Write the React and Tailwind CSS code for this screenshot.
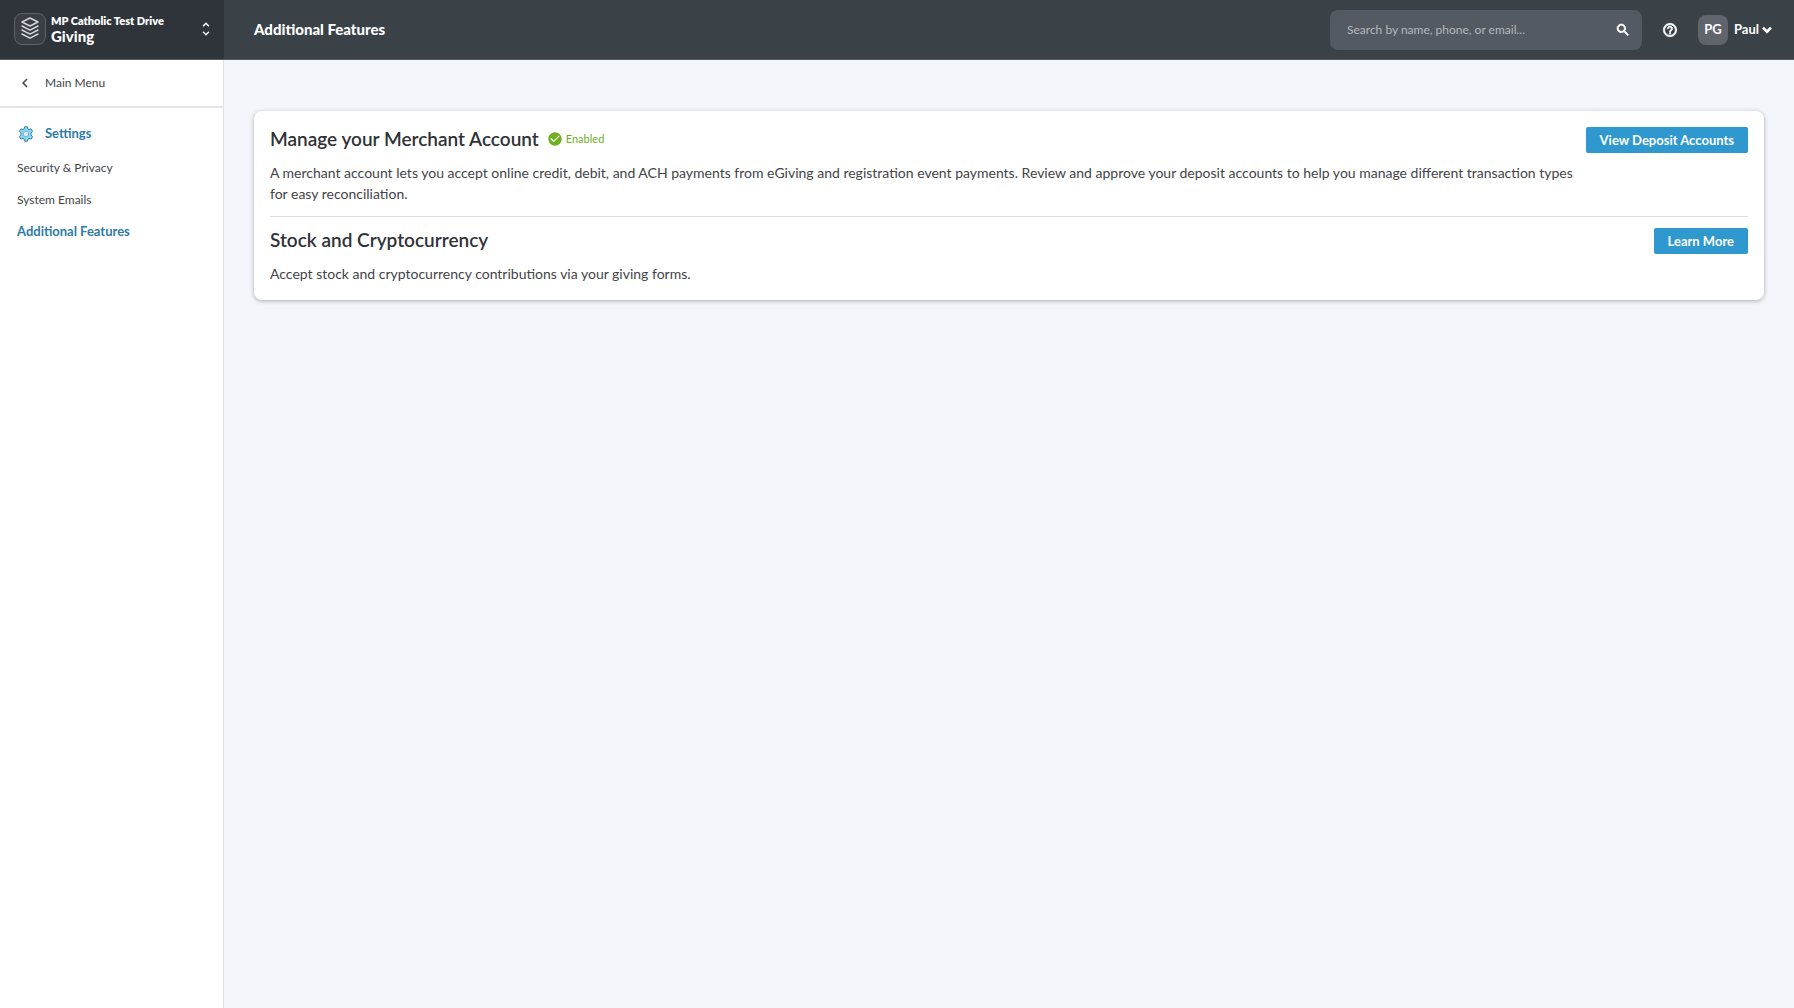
import {
  MdCheckCircle,
  MdChevronLeft,
  MdHelpOutline,
  MdKeyboardArrowDown,
  MdSearch,
  MdUnfoldMore,
} from 'react-icons/md';

function LayersLogo() {
  return (
    <svg viewBox="0 0 32 32" className="size-8 shrink-0" fill="none" aria-hidden="true">
      <rect x="0.5" y="0.5" width="31" height="31" rx="7.5" fill="#3a3f47" stroke="#5d6269" />
      <g stroke="#d2d5d9" strokeWidth="1.5" strokeLinejoin="round" strokeLinecap="round">
        <path d="M16 5 24 9 16 13 8 9Z" />
        <path d="M8 13 16 17.200 24 13" />
        <path d="M8 17 16 21.200 24 17" />
        <path d="M8 21 16 25.200 24 21" />
      </g>
    </svg>
  );
}

function GearIcon() {
  return (
    <svg viewBox="0 0 16 16" className="size-4 shrink-0" aria-hidden="true">
      <path
        d="M6.6 .8h2.8l.5 2.200 1.100.6 2.200-.7 1.400 2.400L13 7v2l1.600 1.700-1.400 2.400-2.200-.7-1.100.6-.5 2.200H6.600l-.5-2.200-1.100-.6-2.200.7-1.400-2.400L3 9V7L1.400 5.300l1.400-2.400 2.200.7 1.100-.6Z"
        fill="#8fd0f0"
        stroke="#3a88b0"
        strokeLinejoin="round"
      />
      <circle cx="8" cy="8" r="2.700" fill="#d5f0fb" stroke="#6fbbdd" />
    </svg>
  );
}

const links = [
  { label: 'Security & Privacy' },
  { label: 'System Emails' },
  { label: 'Additional Features', current: true },
];

function Sidebar() {
  return (
    <aside className="w-56 shrink-0 border-r border-[#dfe3e8] bg-white">
      <a href="#main" className="flex h-12 items-center border-b-2 border-[#e3e4e6] pl-4 text-xs">
        <MdChevronLeft className="size-[18px]" />
        <span className="ml-[11px]">Main Menu</span>
      </a>
      <nav aria-label="Settings">
        <h2 className="mt-4 flex h-5 items-center gap-[11px] pl-[18px] text-[13px] font-bold text-[#2d7ca6]">
          <GearIcon />
          Settings
        </h2>
        <ul className="mt-2">
          {links.map(({ label, current }) => (
            <li key={label}>
              <a
                href="#page"
                aria-current={current ? 'page' : undefined}
                className={`flex h-8 items-center px-[17px] ${current ? 'text-[13px] font-bold text-[#2d7ca6]' : 'text-xs'}`}
              >
                {label}
              </a>
            </li>
          ))}
        </ul>
      </nav>
    </aside>
  );
}

function Header() {
  return (
    <header className="flex h-[60px] shrink-0 border-b border-[#555b61] bg-[#3b4247] text-white">
      <button type="button" className="flex w-56 shrink-0 items-center bg-[#2f343b] pr-[9px] pb-[2px] pl-[14px] text-left">
        <LayersLogo />
        <span className="ml-[5px] flex-1">
          <span className="block text-[11px] leading-[14px] font-extrabold">MP Catholic Test Drive</span>
          <span className="block text-[15px] leading-4 font-black">Giving</span>
        </span>
        <MdUnfoldMore className="size-[18px]" />
      </button>
      <div className="flex flex-1 items-center pr-[19px] pl-[30px]">
        <h1 className="flex-1 text-[15px] font-black">Additional Features</h1>
        <label className="flex h-10 w-78 items-center rounded-lg bg-[#545a61] pr-[11px] pl-[17px]">
          <input
            type="search"
            aria-label="Search"
            placeholder="Search by name, phone, or email..."
            className="min-w-0 flex-1 bg-transparent text-xs outline-none placeholder:text-[#b4b8bd]"
          />
          <MdSearch className="size-4 [&>path:last-child]:stroke-1" />
        </label>
        <button type="button" aria-label="Help" className="ml-5">
          <MdHelpOutline className="size-4 [&>path:last-child]:stroke-1" />
        </button>
        <button type="button" className="ml-5 flex items-center text-[13px] font-bold">
          <span className="flex size-[30px] items-center justify-center rounded-lg bg-[#60656d]">PG</span>
          <span className="ml-1.5">Paul</span>
          <MdKeyboardArrowDown className="size-4 [&>path:last-child]:stroke-2" />
        </button>
      </div>
    </header>
  );
}

function Feature({ title, status, action, children }) {
  return (
    <section className="flex items-start gap-1.5">
      <div className="flex-1">
        <div className="flex h-6 items-center gap-2">
          <h2 className="text-[19px] font-semibold text-[#303236]">{title}</h2>
          {status && (
            <span className="flex items-center gap-[3px] text-[11px] text-[#6fb01f]">
              <MdCheckCircle className="size-4" />
              {status}
            </span>
          )}
        </div>
        <p className="mt-[11px] text-sm leading-[21px]">{children}</p>
      </div>
      <button type="button" className="h-[26px] rounded-xs bg-[#2e98cf] px-[14px] pt-[2px] text-[13px] font-bold whitespace-nowrap text-white">
        {action}
      </button>
    </section>
  );
}

export default function App() {
  return (
    <div className="flex min-h-screen flex-col bg-[#f2f6fb] font-['Lato',sans-serif] text-[#424448]">
      <Header />
      <div className="flex flex-1">
        <Sidebar />
        <main className="flex-1 px-[30px] pt-[51px]">
          <div className="rounded-lg bg-white p-4 shadow-[0_1px_4px_rgba(0,0,0,0.3)]">
            <Feature title="Manage your Merchant Account" status="Enabled" action="View Deposit Accounts">
              A merchant account lets you accept online credit, debit, and ACH payments from eGiving and registration
              event payments. Review and approve your deposit accounts to help you manage different transaction types
              for easy reconciliation.
            </Feature>
            <hr className="mt-3 mb-[11px] border-[#dcdee1]" />
            <Feature title="Stock and Cryptocurrency" action="Learn More">
              Accept stock and cryptocurrency contributions via your giving forms.
            </Feature>
          </div>
        </main>
      </div>
    </div>
  );
}
